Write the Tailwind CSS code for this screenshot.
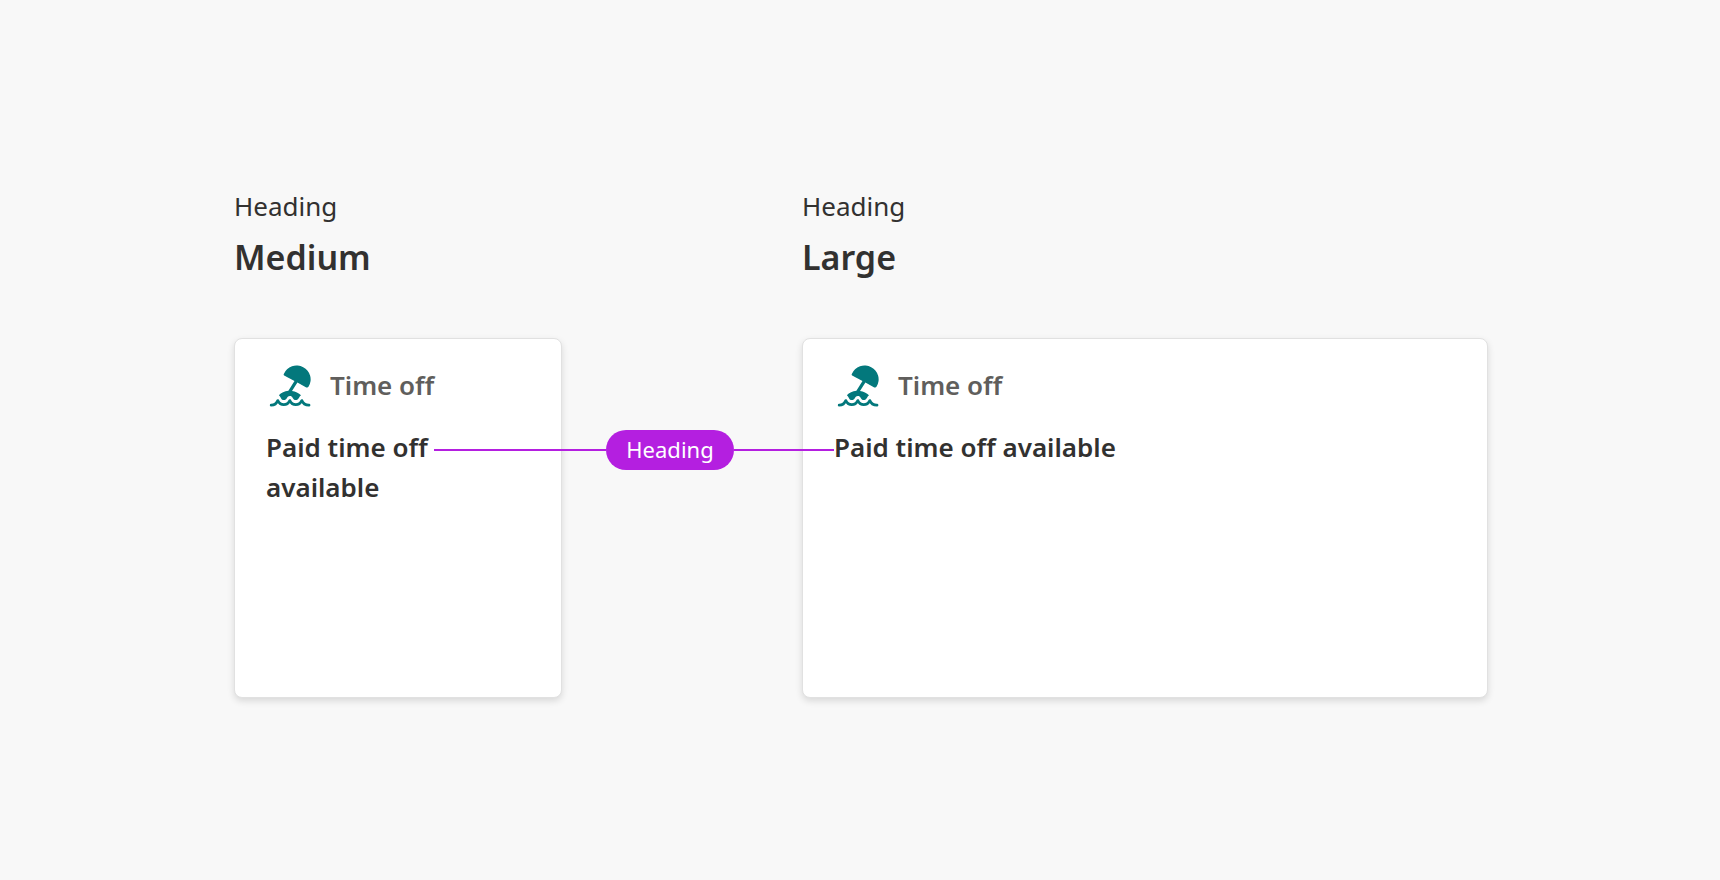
<!DOCTYPE html>
<html lang="en">
<head>
<meta charset="utf-8">
<title>Card headings</title>
<script src="https://cdn.jsdelivr.net/npm/@tailwindcss/browser@4"></script>
</head>
<body class="min-h-screen bg-[#f8f8f8] font-['Segoe_UI','Noto_Sans',sans-serif] text-[#323130]">
<svg class="hidden" aria-hidden="true">
  <symbol id="beach" viewBox="0 0 48 48">
    <path fill="currentColor" d="M18.6 13.8C17.7 13.3 17.4 12.7 17.8 11.9A13.6 13.6 0 0 1 37.2 5.3A13.6 13.6 0 0 1 42.6 24.6C42.1 25.5 41.3 25.9 40.3 25.4L31.4 20.6L26 28.9C29.4 29.2 32.8 31 35 33.2C33.8 34 33.3 35.2 32.5 36.6C31.7 37.8 30.8 38.1 29.7 38.1C28.2 38.1 27.4 37.3 26.7 36C26 34.6 25.2 34 23.8 34C22.4 34 21.6 34.7 20.9 36C20.2 37.4 19.3 38.1 17.9 38.1C16.6 38.1 15.8 37.6 15 36.2C14.3 34.8 13.8 33.8 12.8 33.2C15.2 30.7 18.6 29.1 22.4 28.8L28.5 19.1Z"/>
    <path fill="none" stroke="currentColor" stroke-width="2.8" stroke-linecap="round" stroke-linejoin="round" d="M5.2 43.2C8.6 43.2 10.6 41.8 11.8 38.6C13.2 41.4 15 42.7 17.8 42.7C20.6 42.7 22.4 41.4 23.8 38.6C25.2 41.4 27 42.7 29.8 42.7C32.6 42.7 34.4 41.4 35.8 38.6C37 41.8 39 43.2 43 43.2"/>
  </symbol>
</svg>
<main class="relative flex gap-60 pt-[184px] pr-[232px] pl-[234px]">
  <section class="w-[328px] shrink-0">
    <p class="text-[26px] leading-[44px]">Heading</p>
    <h2 class="text-[34px] leading-[58px] font-semibold">Medium</h2>
    <article class="mt-[52px] h-[360px] rounded-lg border border-[#e1e1e1] bg-white px-[31px] pt-[23px] shadow-[0_3px_7px_rgba(0,0,0,0.13)]">
      <header class="flex items-start gap-4 text-[#605e5c]">
        <svg class="size-12 text-[#03787c]" aria-hidden="true"><use href="#beach"/></svg>
        <h3 class="text-[26px] leading-[46px] font-semibold">Time off</h3>
      </header>
      <p class="mt-[17px] text-[26px] leading-10 font-semibold">Paid time off available</p>
    </article>
  </section>
  <section class="min-w-0 flex-1">
    <p class="text-[26px] leading-[44px]">Heading</p>
    <h2 class="text-[34px] leading-[58px] font-semibold">Large</h2>
    <article class="mt-[52px] h-[360px] rounded-lg border border-[#e1e1e1] bg-white px-[31px] pt-[23px] shadow-[0_3px_7px_rgba(0,0,0,0.13)]">
      <header class="flex items-start gap-4 text-[#605e5c]">
        <svg class="size-12 text-[#03787c]" aria-hidden="true"><use href="#beach"/></svg>
        <h3 class="text-[26px] leading-[46px] font-semibold">Time off</h3>
      </header>
      <p class="mt-[17px] text-[26px] leading-10 font-semibold">Paid time off available</p>
    </article>
  </section>
  <!-- Callout joining the headings of the two cards -->
  <div class="absolute top-[430px] left-[434px] flex w-[400px] items-center">
    <span class="h-0.5 w-[172px] bg-[#b41fe0]"></span>
    <span class="h-10 w-32 rounded-full bg-[#b41fe0] text-center text-[22px] leading-[38px] text-white">Heading</span>
    <span class="h-0.5 flex-1 bg-[#b41fe0]"></span>
  </div>
</main>
</body>
</html>
